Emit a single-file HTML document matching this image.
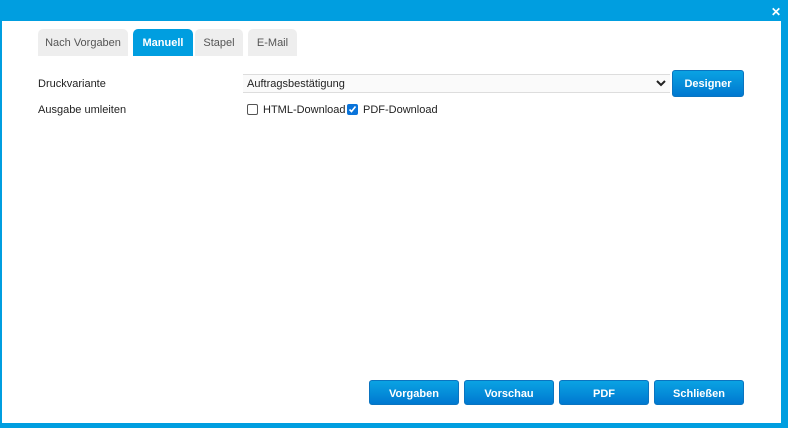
<html><head><style>
body{margin:0;width:788px;height:428px;background:#009ee0;position:relative;overflow:hidden;font-family:"Liberation Sans",sans-serif;font-size:11px;color:#222}
.c{position:absolute;left:2px;top:21px;width:779px;height:402px;background:#fff}
.x{position:absolute;left:771px;top:5px;color:#fff;font-weight:bold;font-size:12px}
.t{position:absolute;top:29px;height:27px;line-height:29px;text-align:center;background:#eee;border-radius:5px 5px 0 0;color:#555;font-size:11px}
.t.a{background:#009ee0;color:#fff;font-weight:bold}
.l{position:absolute;left:38px}
.b{position:absolute;height:25px;line-height:26px;text-align:center;color:#fff;font-weight:bold;font-size:11px;border-radius:3px;background:linear-gradient(#0aa3e3,#0078d0);border:1px solid #0a74c0;box-sizing:border-box}
.sel{position:absolute;left:243px;top:74px;width:427px;height:19px;border:1px solid #ddd;border-width:1px 0;background:#fafafa;box-sizing:border-box;line-height:18px;padding-left:4px;font-size:11px}
.cb{position:absolute;top:104px;width:11px;height:11px;border:1px solid #555;border-radius:2px;box-sizing:border-box}
</style></head><body>
<div class="x">✕</div>
<div class="c"></div>
<div class="t" style="left:38px;width:90px">Nach Vorgaben</div>
<div class="t a" style="left:133px;width:60px">Manuell</div>
<div class="t" style="left:195px;width:48px">Stapel</div>
<div class="t" style="left:248px;width:49px">E-Mail</div>
<div class="l" style="top:78px">Druckvariante</div>
<div class="l" style="top:104px">Ausgabe umleiten</div>
<div class="sel">Auftragsbestätigung<svg style="position:absolute;right:4px;top:5px" width="10" height="7" viewBox="0 0 10 7"><path d="M1 1l4 4 4-4" stroke="#222" stroke-width="2" fill="none"/></svg></div>
<div class="b" style="left:672px;top:70px;width:72px;height:27px;line-height:27px">Designer</div>
<div class="cb" style="left:247px"></div>
<div style="position:absolute;left:263px;top:104px">HTML-Download</div>
<div class="cb" style="left:347px;background:#0a74da;border-color:#0a74da"><svg width="9" height="9" viewBox="0 0 9 9" style="position:absolute;left:0;top:0"><path d="M1.5 4.5l2 2 4-5" stroke="#fff" stroke-width="1.6" fill="none"/></svg></div>
<div style="position:absolute;left:363px;top:104px">PDF-Download</div>
<div class="b" style="left:369px;top:380px;width:90px">Vorgaben</div>
<div class="b" style="left:464px;top:380px;width:90px">Vorschau</div>
<div class="b" style="left:559px;top:380px;width:90px">PDF</div>
<div class="b" style="left:654px;top:380px;width:90px">Schließen</div>
</body></html>
